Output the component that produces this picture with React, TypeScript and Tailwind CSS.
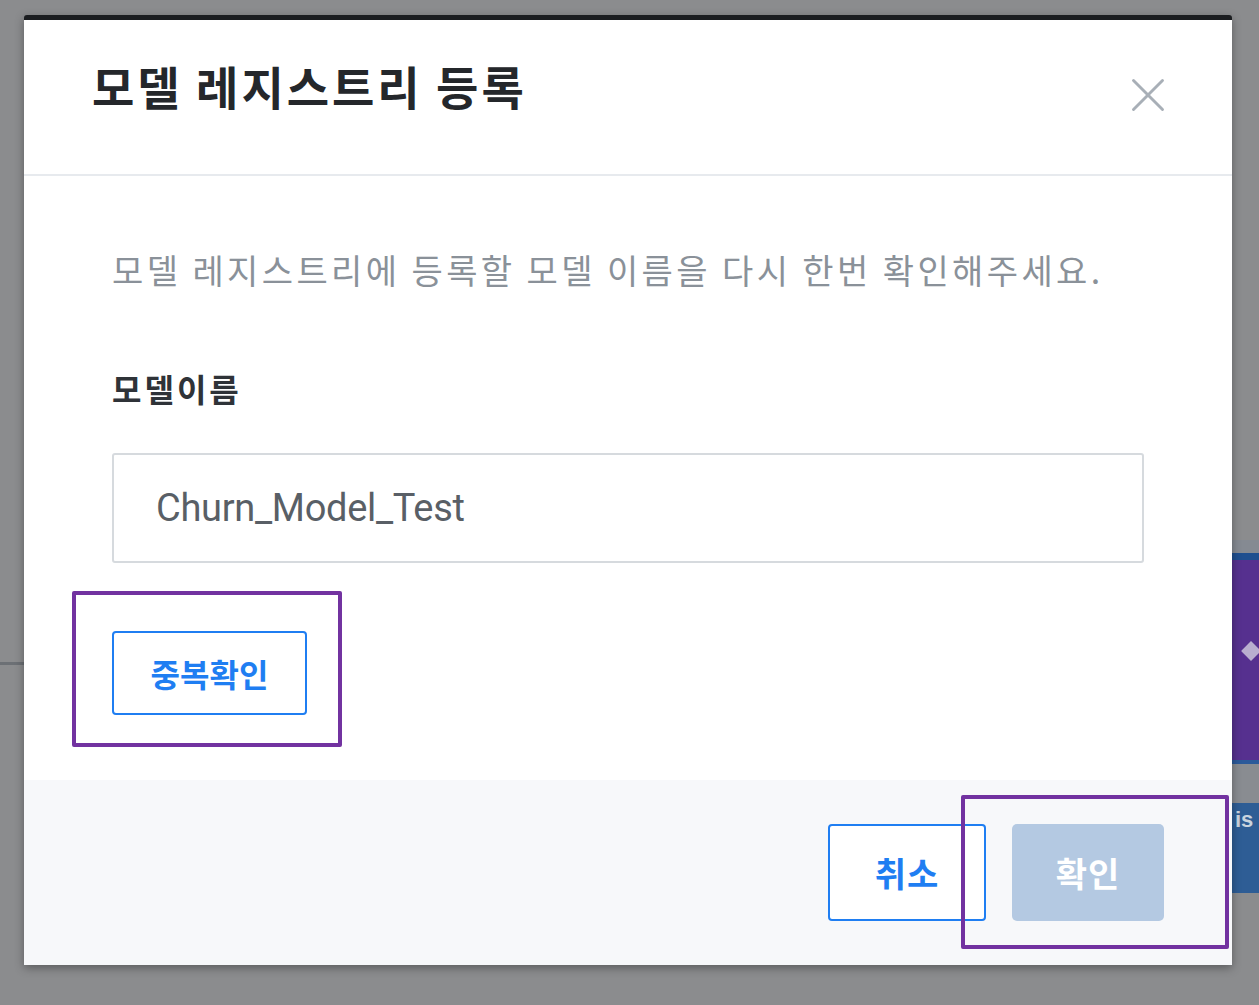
import { X } from 'lucide-react'

const KR = { fontFamily: '"Noto Sans CJK KR", "Noto Sans", sans-serif' }

// page behind the dim layer, only the slice that peeks out on the right
function RightStrip() {
  return (
    <div className="absolute left-[1232px] top-[540px] w-[27px] flex flex-col">
      <div className="h-[13px] bg-[#858a92]" />
      <div className="h-[7px] bg-[#1f4f8f]" />
      <div className="relative h-[200px] bg-[#56308f]">
        <div className="absolute left-[12px] top-[84px] w-[14px] h-[14px] rotate-45 bg-[#b9aecf]" />
      </div>
      <div className="h-[4px] bg-[#2c5a9a]" />
      <div className="h-[39px] bg-[#898c91]" />
      <div className="h-[90px] bg-[#2e5d95] overflow-hidden pl-[3px] pt-[6px]">
        <span className="block text-[22px] font-bold leading-none text-[#c9d3de]" style={{ fontFamily: '"Liberation Sans", sans-serif' }}>is</span>
      </div>
    </div>
  )
}

export default function App() {
  return (
    <div className="relative w-[1259px] h-[1005px] overflow-hidden bg-[#8b8c8e]" style={KR}>
      <div className="absolute left-0 top-[662px] w-[24px] h-[3px] bg-[#6c7075]" />
      <RightStrip />

      <div className="absolute left-[24px] top-[15px] w-[1208px] h-[950px] flex flex-col bg-white border-t-[5px] border-[#1b1d20] rounded-t-[3px] shadow-[0_3px_10px_rgba(0,0,0,0.35)]">
        <div className="h-[156px] shrink-0 flex items-start justify-between pl-[68px] pr-[55px] pt-[38px] border-b-2 border-[#e7eaee]">
          <h2 className="text-[46px] font-bold leading-[1.2] text-[#24272b] tracking-[3px]">모델 레지스트리 등록</h2>
          <button className="mt-[8px] text-[#a8afb7]">
            <X size={58} strokeWidth={1.2} />
          </button>
        </div>

        <div className="flex-1 flex flex-col items-start px-[88px] pt-[74px]">
          <p className="text-[34px] leading-[1.2] text-[#8a9199] tracking-[3.4px]">모델 레지스트리에 등록할 모델 이름을 다시 한번 확인해주세요.</p>
          <label className="mt-[78px] text-[32px] font-bold leading-[1.2] text-[#2f3338] tracking-[3px]">모델이름</label>
          <div className="mt-[46px] w-full h-[110px] flex items-center pl-[42px] border-2 border-[#d6dade] rounded-[3px]">
            <span className="text-[38px] text-[#595f66] tracking-[-0.3px]" style={{ fontFamily: 'Roboto, sans-serif' }}>Churn_Model_Test</span>
          </div>
          <button className="mt-[68px] w-[195px] h-[84px] flex items-center justify-center border-2 border-[#1f7ef2] rounded-[4px] bg-white text-[32px] font-bold text-[#1f7ef2]">중복확인</button>
        </div>

        <div className="h-[185px] shrink-0 flex items-center justify-end gap-[26px] pr-[68px] bg-[#f7f8fa]">
          <button className="w-[158px] h-[97px] flex items-center justify-center border-2 border-[#1f7ef2] rounded-[4px] bg-white text-[34px] font-bold text-[#1f7ef2] tracking-[1px]">취소</button>
          <button className="w-[152px] h-[97px] flex items-center justify-center rounded-[5px] bg-[#b4c9e2] text-[34px] font-bold text-white tracking-[1px]">확인</button>
        </div>
      </div>

      {/* annotation boxes drawn over the screenshot */}
      <div className="absolute left-[72px] top-[591px] w-[270px] h-[156px] border-[4px] border-[#7232a0] rounded-[2px]" />
      <div className="absolute left-[961px] top-[795px] w-[268px] h-[154px] border-[4px] border-[#7232a0] rounded-[2px]" />
    </div>
  )
}
